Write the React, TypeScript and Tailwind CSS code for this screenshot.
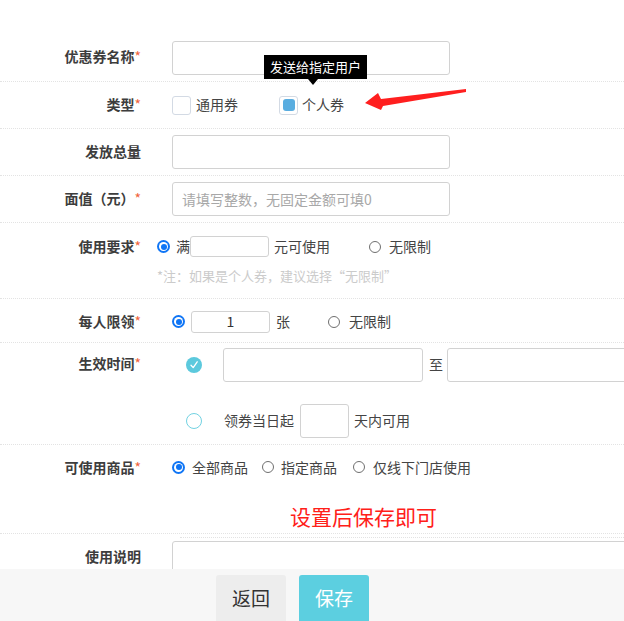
import React from "react";

const FONT = { fontFamily: "'Noto Sans CJK SC', 'Liberation Sans', sans-serif" };

function Label({ text, req = true, className = "" }: { text: string; req?: boolean; className?: string }) {
  return (
    <div className={"w-[141px] shrink-0 text-right text-[14px] leading-[20px] font-bold text-[#3d3d3d] " + className}>
      {text}
      {req && <span className="text-[#f0643c] font-normal">*</span>}
    </div>
  );
}

function Radio({ on = false, className = "" }: { on?: boolean; className?: string }) {
  if (on) {
    return (
      <span className={"w-[13px] h-[13px] rounded-full bg-[#0f75f5] flex items-center justify-center shrink-0 " + className}>
        <span className="w-[9px] h-[9px] rounded-full bg-white flex items-center justify-center">
          <span className="w-[6px] h-[6px] rounded-full bg-[#0f75f5]" />
        </span>
      </span>
    );
  }
  return <span className={"block w-[12px] h-[12px] rounded-full border border-[#6f6f6f] bg-white shrink-0 " + className} />;
}

function Input({ className = "", children }: { className?: string; children?: React.ReactNode }) {
  return (
    <div className={"border border-[#d2d2d2] rounded-[3px] bg-white shrink-0 flex items-center " + className}>
      {children}
    </div>
  );
}

export default function App() {
  return (
    <div style={FONT} className="w-[624px] h-[621px] overflow-hidden bg-white flex flex-col text-[#444]">
      <div className="flex-1 overflow-hidden relative pt-[34px]">
        {/* 优惠券名称 */}
        <div className="h-[48px] flex items-center border-b border-dotted border-[#e3e3e3]">
          <Label text="优惠券名称" className="pb-[3px]" />
          <Input className="ml-[31px] w-[278px] h-[34px]" />
        </div>

        {/* 类型 */}
        <div className="h-[47px] flex items-center border-b border-dotted border-[#e3e3e3]">
          <Label text="类型" className="pb-[3px]" />
          <span className="ml-[31px] w-[19px] h-[19px] rounded-[3px] border border-[#d3dae4] bg-white" />
          <span className="ml-[5px] text-[14px] leading-[20px] pb-[2px]">通用券</span>
          <span className="ml-[41px] w-[19px] h-[19px] rounded-[3px] border border-[#d3dae4] bg-white flex items-center justify-center">
            <span className="w-[12px] h-[12px] rounded-[3px] bg-[#59ade0]" />
          </span>
          <span className="ml-[4px] text-[14px] leading-[20px] pb-[2px]">个人券</span>
        </div>

        {/* 发放总量 */}
        <div className="h-[47px] flex items-center border-b border-dotted border-[#e3e3e3]">
          <Label text="发放总量" req={false} className="pb-[3px]" />
          <Input className="ml-[31px] w-[278px] h-[34px]" />
        </div>

        {/* 面值 */}
        <div className="h-[47px] flex items-center border-b border-dotted border-[#e3e3e3]">
          <Label text="面值（元）" className="pb-[3px]" />
          <Input className="ml-[31px] w-[278px] h-[34px] pl-[9px]">
            <span className="text-[14px] text-[#a8a8a8]">请填写整数，无固定金额可填0</span>
          </Input>
        </div>

        {/* 使用要求 */}
        <div className="h-[76px] flex items-start pt-[13px] border-b border-dotted border-[#e3e3e3]">
          <Label text="使用要求" />
          <div className="ml-[16px] flex flex-col">
            <div className="flex items-center h-[21px] text-[14px]">
              <Radio on />
              <span className="ml-[6px]">满</span>
              <Input className="w-[79px] h-[21px]" />
              <span className="ml-[5px]">元可使用</span>
              <Radio className="ml-[39px]" />
              <span className="ml-[8px]">无限制</span>
            </div>
            <div className="mt-[10px] text-[13px] leading-[18px] text-[#cbcbcb]">*注：如果是个人券，建议选择“无限制”</div>
          </div>
        </div>

        {/* 每人限领 */}
        <div className="h-[44px] flex items-center pt-[2px] border-b border-dotted border-[#e3e3e3]">
          <Label text="每人限领" className="pb-[2px]" />
          <div className="ml-[31px] flex items-center text-[14px]">
            <Radio on />
            <Input className="ml-[6px] w-[79px] h-[22px] justify-center">
              <span className="text-[14px] text-[#333]">1</span>
            </Input>
            <span className="ml-[6px]">张</span>
            <Radio className="ml-[38px]" />
            <span className="ml-[9px]">无限制</span>
          </div>
        </div>

        {/* 生效时间 */}
        <div className="h-[102px] flex items-start pt-[5px] border-b border-dotted border-[#e3e3e3]">
          <Label text="生效时间" className="mt-[5px]" />
          <div className="ml-[45px] flex flex-col gap-[23px] text-[14px]">
            <div className="flex items-center h-[33px]">
              <span className="w-[16px] h-[16px] rounded-full bg-[#5cc9dd] flex items-center justify-center shrink-0">
                <svg width="10" height="10" viewBox="0 0 10 10">
                  <path d="M2 5.2 L4.2 7.6 L8.2 1.8" fill="none" stroke="white" strokeWidth="1.3" strokeLinecap="round" strokeLinejoin="round" />
                </svg>
              </span>
              <Input className="ml-[21px] w-[200px] h-[34px]" />
              <span className="ml-[6px]">至</span>
              <Input className="ml-[4px] w-[200px] h-[34px]" />
            </div>
            <div className="flex items-center h-[33px]">
              <span className="w-[16px] h-[16px] rounded-full border-[1.5px] border-[#72d2e2] bg-white shrink-0" />
              <span className="ml-[22px]">领券当日起</span>
              <Input className="ml-[6px] w-[49px] h-[34px]" />
              <span className="ml-[5px]">天内可用</span>
            </div>
          </div>
        </div>

        {/* 可使用商品 */}
        <div className="h-[89px] flex flex-col pt-[12px] border-b border-dotted border-[#e3e3e3]">
          <div className="flex items-center h-[20px]">
            <Label text="可使用商品" />
            <div className="ml-[31px] flex items-center text-[14px]">
              <Radio on />
              <span className="ml-[7px]">全部商品</span>
              <Radio className="ml-[14px]" />
              <span className="ml-[7px]">指定商品</span>
              <Radio className="ml-[16px]" />
              <span className="ml-[8px]">仅线下门店使用</span>
            </div>
          </div>
          <div className="mt-[26px] ml-[290px] text-[21px] leading-[26px] text-[#ff2019]">设置后保存即可</div>
          <div className="mt-[8px] ml-[180px] border-t border-dotted border-[#e3e3e3]" />
        </div>

        {/* 使用说明 */}
        <div className="flex items-start pt-[7px]">
          <Label text="使用说明" req={false} className="mt-[5px]" />
          <Input className="ml-[31px] w-[500px] h-[80px]" />
        </div>

        {/* tooltip */}
        <div className="absolute left-[264px] top-[55px] bg-black text-white text-[13px] leading-[24px] px-[6px] whitespace-nowrap">
          发送给指定用户
          <span className="absolute left-[44px] top-[24px] w-0 h-0 border-l-[5px] border-r-[5px] border-t-[6px] border-l-transparent border-r-transparent border-t-black" />
        </div>

        {/* red arrow */}
        <svg className="absolute left-[355px] top-[80px]" width="120" height="40" viewBox="0 0 120 40">
          <polygon points="10,23 23,13 26,19 111,9 111,12 28,26 26,30" fill="#ff1f1f" />
        </svg>
      </div>

      <div className="h-[52px] shrink-0 bg-[#f7f7f7] flex items-start pt-[6px]">
        <button className="ml-[216px] w-[70px] h-[48px] rounded-[3px] bg-[#ededed] text-[#333] text-[19px] pb-[2px]">返回</button>
        <button className="ml-[13px] w-[70px] h-[48px] rounded-[3px] bg-[#5ccfe0] text-white text-[19px] pb-[2px]">保存</button>
      </div>
    </div>
  );
}
